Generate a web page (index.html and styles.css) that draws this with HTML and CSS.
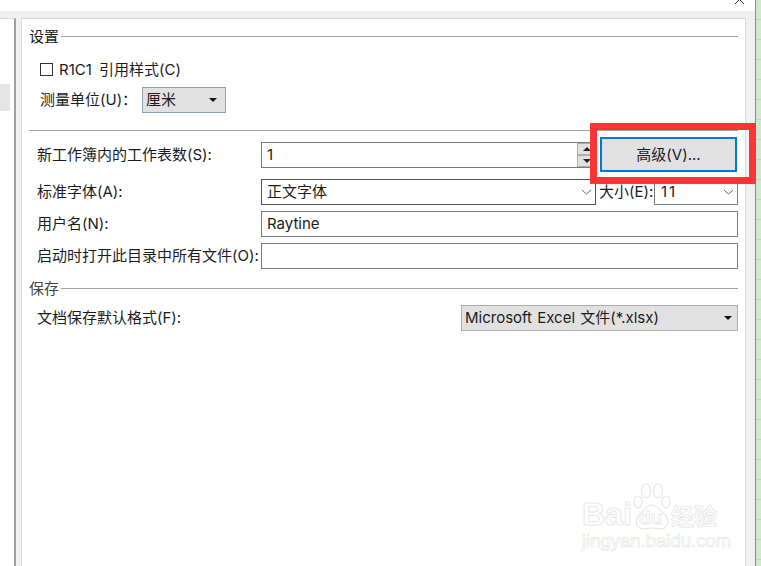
FILE: index.html
```html
<!DOCTYPE html>
<html lang="zh-CN">
<head>
<meta charset="utf-8">
<title>选项</title>
<link rel="stylesheet" href="styles.css">
</head>
<body>
<div class="screen">
  <div class="dialog">
    <div class="titlebar">
      <svg class="close" width="12" height="6" viewBox="0 0 12 6"><path d="M1 4 L5 0 M6 0 L10 4" stroke="#333" stroke-width="1" fill="none"/></svg>
    </div>
    <div class="dialog-body">
      <div class="sidebar"><div class="side-item"></div></div>
      <div class="pane">
        <div class="legend legend-first"><span class="txt">设置</span><i class="rule"></i></div>
        <div class="check-row"><span class="checkbox"></span><span class="txt txt-wide">R1C1 引用样式(C)</span></div>
        <div class="unit-row">
          <span class="unit-label txt">测量单位(U)：</span>
          <div class="dropdown unit-select"><span class="txt">厘米</span><i class="tri"></i></div>
        </div>
        <div class="divider"></div>
        <div class="row row-sheets">
          <label class="label txt">新工作簿内的工作表数(S):</label>
          <div class="field field-main">
            <span class="grow txt">1</span>
            <div class="spin">
              <div class="spin-btn"><i class="spin-up"></i></div>
              <div class="spin-btn"><i class="spin-down"></i></div>
            </div>
          </div>
          <div class="advanced"><span class="txt">高级(V)...</span></div>
        </div>
        <div class="row row-font">
          <label class="label txt">标准字体(A):</label>
          <div class="field field-main field-dark">
            <span class="grow txt">正文字体</span>
            <svg class="chev" width="11" height="6" viewBox="0 0 11 6"><path d="M1 1 L5.5 5 L10 1" stroke="#666" fill="none"/></svg>
          </div>
          <span class="size-label txt">大小(E):</span>
          <div class="field field-size">
            <span class="grow txt">11</span>
            <svg class="chev" width="11" height="6" viewBox="0 0 11 6"><path d="M1 1 L5.5 5 L10 1" stroke="#666" fill="none"/></svg>
          </div>
        </div>
        <div class="row row-plain">
          <label class="label txt">用户名(N):</label>
          <div class="field field-full"><span class="txt">Raytine</span></div>
        </div>
        <div class="row row-plain">
          <label class="label txt">启动时打开此目录中所有文件(O):</label>
          <div class="field field-full"></div>
        </div>
        <div class="legend legend-save"><span class="txt">保存</span><i class="rule"></i></div>
        <div class="row row-format">
          <label class="label txt">文档保存默认格式(F):</label>
          <div class="dropdown format-select"><span class="grow txt">Microsoft Excel 文件(*.xlsx)</span><i class="tri"></i></div>
        </div>
      </div>
    </div>
  </div>
  <div class="sheet"></div>
  <div class="highlight"></div>
  <div class="watermark">
    <div class="wm-top">
      <span class="wm-bai">Bai</span>
      <svg class="wm-paw" width="38" height="48" viewBox="0 0 38 48" fill="#fff" stroke="#e6e6e6" stroke-width="1.2">
        <ellipse cx="5" cy="19" rx="4" ry="6"/>
        <ellipse cx="13" cy="8" rx="4.5" ry="7"/>
        <ellipse cx="25" cy="8" rx="4.5" ry="7"/>
        <ellipse cx="33" cy="19" rx="4" ry="6"/>
        <path d="M19 22 C13 22 12 27 8 30 C2 34 1 45 10 46 C14 46 16 45 19 45 C22 45 24 46 28 46 C37 45 36 34 30 30 C26 27 25 22 19 22 Z"/>
      </svg>
      <span class="wm-du">du</span>
      <span class="wm-jy">经验</span>
    </div>
    <div class="wm-url">jingyan.baidu.com</div>
  </div>
</div>
</body>
</html>
```

FILE: styles.css
```css
* { box-sizing: border-box; }
html, body { margin: 0; padding: 0; }
body {
  font-family: Inter, "Noto Sans CJK SC", sans-serif;
  font-size: 15px;
  line-height: 20px;
  color: #1c1c1c;
  background: #fff;
}
.txt { display: block; white-space: nowrap; }
.txt-wide { word-spacing: 3px; }
.screen {
  position: relative;
  width: 761px;
  height: 566px;
  display: flex;
  overflow: hidden;
}
.dialog {
  width: 756px;
  display: flex;
  flex-direction: column;
  border-right: 1px solid #8c8c8c;
}
.titlebar {
  position: relative;
  height: 11px;
  background: #fff;
  display: flex;
  justify-content: flex-end;
  padding-right: 9px;
}
.close { display: block; }
.dialog-body {
  flex: 1;
  background: #f0f0f0;
  padding-top: 7px;
  display: flex;
}
.sidebar {
  width: 16px;
  background: #fff;
  border-right: 2px solid #a0a0a0;
  border-top: 1px solid #d9d9d9;
  padding-top: 65px;
}
.side-item { width: 10px; height: 27px; background: #e5e5e5; }
.pane {
  margin-left: 5px;
  width: 725px;
  background: #fff;
  border: 1px solid #d9d9d9;
  border-bottom: 0;
  padding: 8px 7px 0;
}
.legend {
  display: flex;
  align-items: center;
  height: 20px;
}
.legend .rule { flex: 1; height: 1px; background: #a0a0a0; margin-left: 2px; margin-top: -1px; }
.legend-save { margin-top: 10px; color: #444; }
.check-row {
  margin-top: 10px;
  height: 26px;
  display: flex;
  align-items: center;
  padding-left: 11px;
}
.checkbox {
  width: 13px;
  height: 13px;
  border: 1px solid #333;
  margin-right: 6px;
  margin-top: -1px;
}
.unit-row {
  margin-top: 4px;
  height: 26px;
  display: flex;
  align-items: center;
  padding-left: 11px;
}
.unit-label { width: 102px; }
.dropdown {
  display: flex;
  align-items: center;
  height: 26px;
  background: #e1e1e1;
  padding: 0 5px 0 3px;
}
.unit-select { width: 84px; border: 1px solid #8ba1b5; justify-content: space-between; }
.tri {
  width: 0;
  height: 0;
  border-left: 4px solid transparent;
  border-right: 4px solid transparent;
  border-top: 4px solid #111;
}
.unit-select .tri { margin-right: 3px; }
.divider { margin-top: 17px; height: 1px; background: #a0a0a0; }
.row { display: flex; align-items: center; }
.label { width: 232px; padding-left: 8px; flex: none; }
.row-sheets { margin-top: 6px; height: 35px; }
.row-font { margin-top: 7px; height: 26px; }
.row-plain { margin-top: 6px; height: 26px; }
.row-format { margin-top: 6px; height: 26px; justify-content: space-between; }
.row-format .label { width: auto; }
.field {
  display: flex;
  align-items: center;
  height: 26px;
  border: 1px solid #7a7a7a;
  background: #fff;
  padding-left: 5px;
  flex: none;
}
.field-main { width: 335px; }
.field-dark { border-color: #555; }
.field-full { width: 477px; }
.field-size { width: 84px; margin-left: 2px; padding-left: 6px; letter-spacing: 2px; }
.grow { flex: 1; }
.chev { margin-right: 3px; display: block; }
.spin {
  width: 19px;
  height: 24px;
  display: flex;
  flex-direction: column;
  margin-right: -1px;
}
.spin-btn {
  flex: 1;
  background: #e1e1e1;
  border: 1px solid #adadad;
  display: flex;
  align-items: center;
  justify-content: center;
}
.spin-up, .spin-down {
  width: 0;
  height: 0;
  border-left: 4px solid transparent;
  border-right: 4px solid transparent;
}
.spin-up { border-bottom: 4px solid #222; }
.spin-down { border-top: 4px solid #222; }
.advanced {
  width: 137px;
  height: 35px;
  margin-left: 4px;
  background: #e1e1e1;
  border: 2px solid #0078d7;
  display: flex;
  align-items: center;
  justify-content: center;
  flex: none;
}
.size-label { margin-left: 3px; width: 53px; flex: none; }
.format-select { width: 277px; border: 1px solid #adadad; padding: 0 5px 0 3px; flex: none; word-spacing: 1px; }
.sheet {
  width: 5px;
  background: repeating-linear-gradient(to bottom, #cfe8cf 0, #cfe8cf 19px, #b9d6b9 19px, #b9d6b9 20px);
}
.highlight {
  position: absolute;
  left: 590px;
  top: 123px;
  width: 166px;
  height: 61px;
  border: 7px solid #fb3535;
}
.watermark {
  position: absolute;
  left: 582px;
  top: 483px;
  width: 140px;
  color: #fff;
  font-family: "Liberation Sans", sans-serif;
}
.wm-top { position: relative; display: flex; align-items: flex-end; height: 48px; }
.wm-bai {
  font-size: 32px;
  line-height: 34px;
  font-weight: 700;
  width: 51px;
  -webkit-text-stroke: 1px #e8e8e8;
}
.wm-paw { display: block; }
.wm-du {
  position: absolute;
  left: 57px;
  top: 25px;
  font-size: 19px;
  line-height: 20px;
  font-weight: 700;
  color: #fff;
  -webkit-text-stroke: 0.8px #e8e8e8;
}
.wm-jy {
  font-family: "Noto Sans CJK SC", sans-serif;
  font-size: 23px;
  line-height: 32px;
  font-weight: 700;
  white-space: nowrap;
  -webkit-text-stroke: 0.8px #e8e8e8;
}
.wm-url {
  margin-top: 1px;
  font-size: 18.5px;
  line-height: 18px;
  white-space: nowrap;
  -webkit-text-stroke: 0.7px #e8e8e8;
}
```
